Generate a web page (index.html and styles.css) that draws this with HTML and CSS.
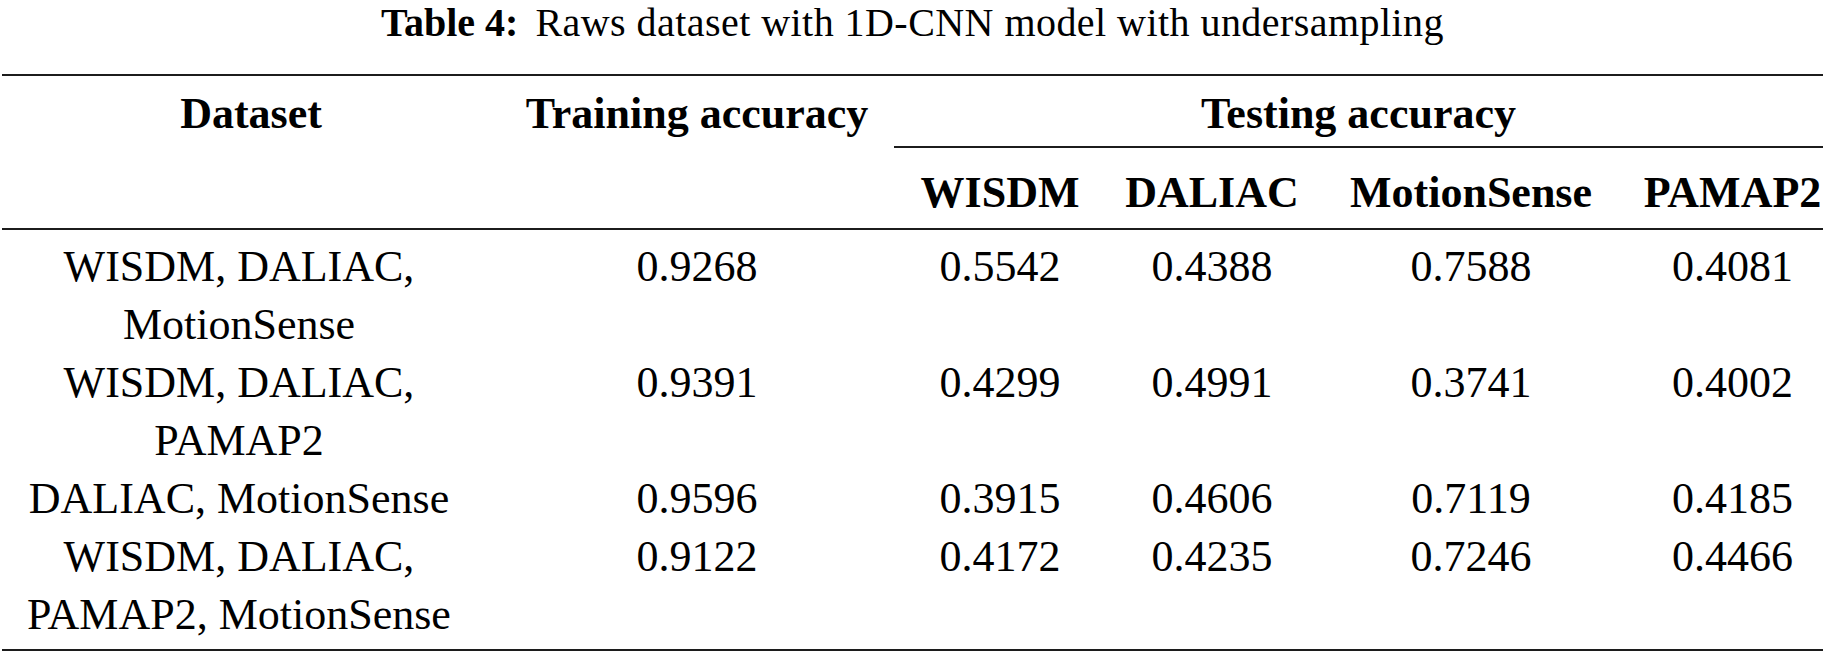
FILE: index.html
```html
<!DOCTYPE html>
<html lang="en">
<head>
<meta charset="utf-8">
<title>Table 4</title>
<link rel="stylesheet" href="styles.css">
</head>
<body>
<div class="page">
  <p class="caption"><span class="cap-label">Table 4:</span><span class="cap-text">Raws dataset with 1D-CNN model with undersampling</span></p>
  <table class="results">
    <colgroup>
      <col class="w-dataset">
      <col class="w-train">
      <col class="w-wisdm">
      <col class="w-daliac">
      <col class="w-motion">
      <col class="w-pamap">
    </colgroup>
    <thead>
      <tr class="head-top">
        <th class="h-dataset">Dataset</th>
        <th class="c-train">Training accuracy</th>
        <th class="testing" colspan="4">Testing accuracy</th>
      </tr>
      <tr class="head-sub">
        <th></th>
        <th></th>
        <th>WISDM</th>
        <th>DALIAC</th>
        <th>MotionSense</th>
        <th class="c-pamap">PAMAP2</th>
      </tr>
    </thead>
    <tbody>
      <tr class="first">
        <td>WISDM, DALIAC,<br>MotionSense</td>
        <td class="c-train">0.9268</td>
        <td>0.5542</td>
        <td>0.4388</td>
        <td>0.7588</td>
        <td class="c-pamap">0.4081</td>
      </tr>
      <tr>
        <td>WISDM, DALIAC,<br>PAMAP2</td>
        <td class="c-train">0.9391</td>
        <td>0.4299</td>
        <td>0.4991</td>
        <td>0.3741</td>
        <td class="c-pamap">0.4002</td>
      </tr>
      <tr>
        <td>DALIAC, MotionSense</td>
        <td class="c-train">0.9596</td>
        <td>0.3915</td>
        <td>0.4606</td>
        <td>0.7119</td>
        <td class="c-pamap">0.4185</td>
      </tr>
      <tr class="last">
        <td>WISDM, DALIAC,<br>PAMAP2, MotionSense</td>
        <td class="c-train">0.9122</td>
        <td>0.4172</td>
        <td>0.4235</td>
        <td>0.7246</td>
        <td class="c-pamap">0.4466</td>
      </tr>
    </tbody>
  </table>
</div>
</body>
</html>
```
FILE: styles.css
```css
html, body {
  margin: 0;
  padding: 0;
  background: #ffffff;
}

body {
  font-family: "Liberation Serif", "Times New Roman", serif;
  color: #000000;
}

.page {
  padding: 0 3px 0 2px;
}

.caption {
  margin: 0 0 29px;
  text-align: center;
  font-family: "Liberation Serif", "Times New Roman", serif;
  font-size: 40px;
  line-height: 45px;
}

.cap-label {
  font-weight: bold;
}

.cap-text {
  margin-left: 17px;
  letter-spacing: 0.45px;
}

.results {
  width: 1821px;
  table-layout: fixed;
  border-collapse: separate;
  border-spacing: 0;
  border-top: 2px solid #1c1c1c;
  border-bottom: 2px solid #1c1c1c;
  font-family: "Liberation Serif", "Times New Roman", serif;
  font-size: 44px;
  line-height: 58px;
  color: #000000;
}

.w-dataset { width: 474px; }
.w-train { width: 418px; }
.w-wisdm { width: 212px; }
.w-daliac { width: 212px; }
.w-motion { width: 306px; }
.w-pamap { width: 199px; }

.results th,
.results td {
  padding: 0;
  text-align: center;
  vertical-align: top;
  white-space: nowrap;
  font-family: "Liberation Serif", "Times New Roman", serif;
}

.results th {
  font-weight: bold;
}

.head-top th {
  padding-top: 9px;
  padding-bottom: 3px;
}

.head-top .testing {
  border-bottom: 2px solid #1c1c1c;
}

.head-sub th {
  padding-top: 16px;
  padding-bottom: 6px;
  border-bottom: 2px solid #1c1c1c;
}

.results .h-dataset {
  padding-left: 24px;
}

.results .c-train {
  padding-left: 24px;
}

.results .c-pamap {
  padding-left: 18px;
}

.results tr.first td {
  padding-top: 8px;
}

.results tr.last td {
  padding-bottom: 5px;
}
```
